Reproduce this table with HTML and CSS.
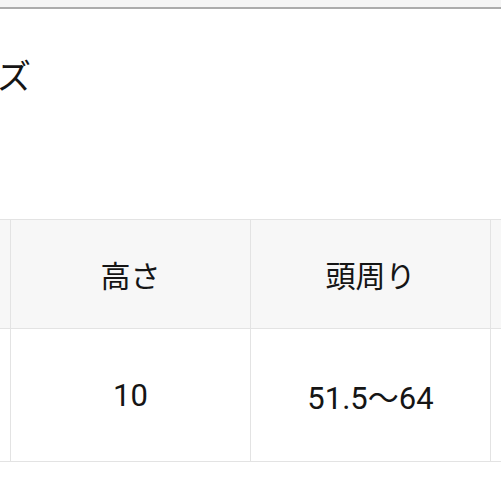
FILE: index.html
```html
<!DOCTYPE html>
<html lang="ja">
<head>
<meta charset="utf-8">
<link rel="stylesheet" href="styles.css">
</head>
<body>
<div class="topbar"></div>
<div class="heading">
  <h2 class="title">帽子サイズ</h2>
</div>
<table class="size-table">
  <thead>
    <tr><th>サイズ</th><th>高さ</th><th>頭周り</th><th>ツバ</th></tr>
  </thead>
  <tbody>
    <tr><td>F</td><td>10</td><td>51.5〜64</td><td>7</td></tr>
  </tbody>
</table>
</body>
</html>
```
FILE: styles.css
```css
html, body {
  margin: 0;
  padding: 0;
  background: #ffffff;
  overflow: hidden;
}
body {
  width: 501px;
  height: 501px;
  font-family: Roboto, "Noto Sans CJK JP", sans-serif;
  color: #151515;
}
.topbar {
  height: 7px;
  background: #f4f4f4;
  border-bottom: 2px solid #ababab;
}
.heading {
  height: 210px;
  box-sizing: border-box;
  padding-top: 46px;
}
.title {
  margin: 0 0 0 -138px;
  font-family: "Noto Sans CJK JP", sans-serif;
  font-weight: 400;
  font-size: 34px;
  line-height: 40px;
  white-space: nowrap;
}
.size-table {
  border-collapse: collapse;
  table-layout: fixed;
  width: 960px;
  margin-left: -230px;
  font-size: 30px;
}
.size-table th,
.size-table td {
  width: 239px;
  border: 1px solid #e3e3e3;
  text-align: center;
  font-weight: 400;
  padding: 0;
}
.size-table th {
  height: 108px;
  background: #f7f7f7;
  font-family: "Noto Sans CJK JP", sans-serif;
}
.size-table td {
  height: 132px;
  background: #ffffff;
  font-size: 31px;
}
```
